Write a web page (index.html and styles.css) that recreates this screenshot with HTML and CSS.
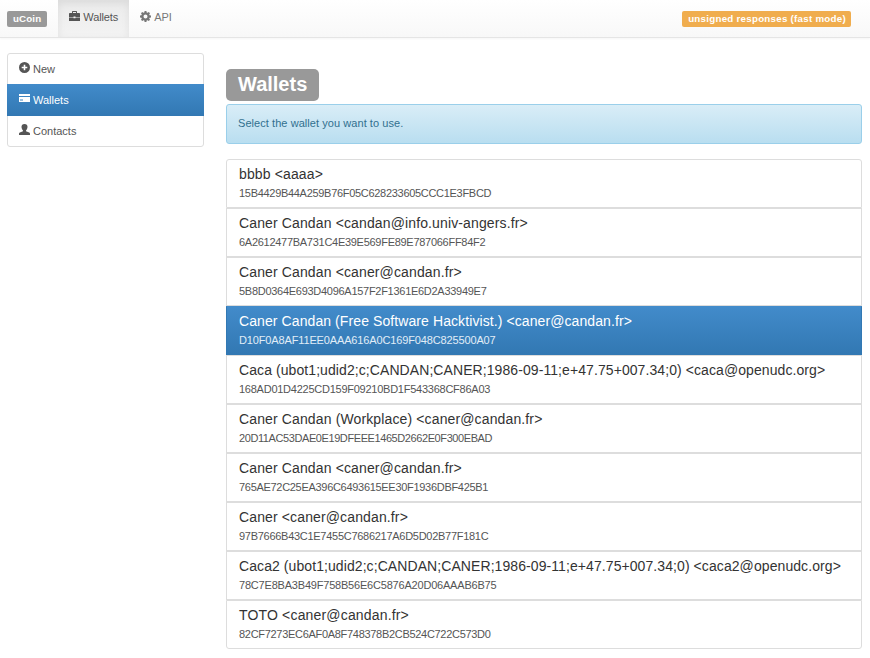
FILE: index.html
```html
<!DOCTYPE html>
<html lang="en">
<head>
<meta charset="utf-8">
<title>uCoin</title>
<link rel="stylesheet" href="styles.css">
</head>
<body>
<header class="navbar">
  <a class="brand"><span class="label">uCoin</span></a>
  <nav class="tabs">
    <a class="tab active"><svg class="icon" viewBox="0 0 11 11"><path d="M3 2V.7Q3 0 3.700 0H7.300Q8 0 8 .7V2h2.300q.7 0 .7.700V6H6.500v-.5h-2V6H0V2.700Q0 2 .7 2zM4 2h3V1H4zM0 6.600h4.500v.6h2v-.6H11V10H0z"/></svg><span>Wallets</span></a>
    <a class="tab"><svg class="icon" viewBox="0 0 11 11"><path fill-rule="evenodd" d="M4.600 0h1.800l.3 1.400.9.400L8.800 1 10 2.200l-.8 1.200.4.900 1.400.3v1.800l-1.400.3-.4.900.8 1.200L8.800 10l-1.200-.8-.9.400L6.400 11H4.600l-.3-1.400-.9-.4-1.200.8L1 8.800l.8-1.200-.4-.9L0 6.400V4.600l1.400-.3.4-.9L1 2.200 2.200 1l1.200.8.9-.4zM5.500 3.500a2 2 0 1 0 0 4 2 2 0 0 0 0-4z"/></svg><span>API</span></a>
  </nav>
  <span class="label warning">unsigned responses (fast mode)</span>
</header>
<div class="layout">
  <aside class="menu">
    <a class="menu-item"><svg class="icon" viewBox="0 0 11 11"><path fill-rule="evenodd" d="M5.500 0a5.500 5.500 0 1 0 0 11 5.500 5.500 0 0 0 0-11zM4.700 2.700h1.600v2h2v1.600h-2v2H4.700v-2h-2V4.700h2z"/></svg>New</a>
    <a class="menu-item active"><svg class="icon" viewBox="0 0 11 11"><path fill-rule="evenodd" d="M0 1h11v2H0zM0 4h11v5H0zM1 6.500v1h3v-1z"/></svg>Wallets</a>
    <a class="menu-item"><svg class="icon" viewBox="0 0 11 11"><path d="M5.500 0C7.500 0 8.500 1.200 8.500 2.800c0 1.500-.6 2.800-1.500 3.600v.9l3.200 1.200q.8.400.8 1.200V11H0V9.700q0-.8.800-1.200L4 7.300v-.9C3.100 5.600 2.500 4.300 2.500 2.800 2.500 1.200 3.500 0 5.500 0z"/></svg>Contacts</a>
  </aside>
  <main class="content">
    <h1 class="title"><span class="title-label">Wallets</span></h1>
    <div class="alert">Select the wallet you want to use.</div>
    <div class="wallets">
      <a class="wallet"><h2>bbbb &lt;aaaa&gt;</h2><p>15B4429B44A259B76F05C628233605CCC1E3FBCD</p></a>
      <a class="wallet"><h2>Caner Candan &lt;candan@info.univ-angers.fr&gt;</h2><p>6A2612477BA731C4E39E569FE89E787066FF84F2</p></a>
      <a class="wallet"><h2>Caner Candan &lt;caner@candan.fr&gt;</h2><p>5B8D0364E693D4096A157F2F1361E6D2A33949E7</p></a>
      <a class="wallet active"><h2>Caner Candan (Free Software Hacktivist.) &lt;caner@candan.fr&gt;</h2><p>D10F0A8AF11EE0AAA616A0C169F048C825500A07</p></a>
      <a class="wallet"><h2>Caca (ubot1;udid2;c;CANDAN;CANER;1986-09-11;e+47.75+007.34;0) &lt;caca@openudc.org&gt;</h2><p>168AD01D4225CD159F09210BD1F543368CF86A03</p></a>
      <a class="wallet"><h2>Caner Candan (Workplace) &lt;caner@candan.fr&gt;</h2><p>20D11AC53DAE0E19DFEEE1465D2662E0F300EBAD</p></a>
      <a class="wallet"><h2>Caner Candan &lt;caner@candan.fr&gt;</h2><p>765AE72C25EA396C6493615EE30F1936DBF425B1</p></a>
      <a class="wallet"><h2>Caner &lt;caner@candan.fr&gt;</h2><p>97B7666B43C1E7455C7686217A6D5D02B77F181C</p></a>
      <a class="wallet"><h2>Caca2 (ubot1;udid2;c;CANDAN;CANER;1986-09-11;e+47.75+007.34;0) &lt;caca2@openudc.org&gt;</h2><p>78C7E8BA3B49F758B56E6C5876A20D06AAAB6B75</p></a>
      <a class="wallet"><h2>TOTO &lt;caner@candan.fr&gt;</h2><p>82CF7273EC6AF0A8F748378B2CB524C722C573D0</p></a>
    </div>
  </main>
</div>
</body>
</html>
```
FILE: styles.css
```css
* { box-sizing: border-box; }
body {
  margin: 0;
  background: #fff;
  color: #333;
  font: 11px/16px "Liberation Sans", Arial, sans-serif;
}
h1, h2, p { margin: 0; font-weight: normal; }
.icon {
  width: 11px;
  height: 11px;
  margin-right: 3px;
  fill: currentColor;
  flex: none;
}
.navbar {
  display: flex;
  height: 38px;
  padding: 0 19px 0 7px;
  border-bottom: 1px solid #e5e5e5;
  background: linear-gradient(#fff, #f8f8f8);
  box-shadow: 0 1px 2px rgba(0, 0, 0, .04);
}
.brand { padding-top: 11px; margin-right: 11px; }
.label {
  display: block;
  height: 16px;
  padding: 0 6px;
  border-radius: 2px;
  background: #999;
  color: #fff;
  font-size: 9.75px;
  font-weight: bold;
  letter-spacing: .14px;
}
.warning { margin: 11px 0 0 auto; padding-right: 5px; background: #f0ad4e; letter-spacing: .26px; }
.tabs { display: flex; }
.tab {
  display: flex;
  height: 37px;
  padding: 11px 11px 0;
  color: #777;
}
.tab span { margin-top: -2px; letter-spacing: -.13px; }
.tab.active {
  width: 71px;
  background: linear-gradient(#ebebeb, #f3f3f3);
  box-shadow: inset 0 3px 9px rgba(0, 0, 0, .075);
  color: #555;
}
.layout {
  display: flex;
  gap: 22px;
  padding: 15px 8px 0 7px;
}
.menu {
  width: 197px;
  height: 94px;
  border: 1px solid #ddd;
  border-radius: 3px;
}
.menu-item {
  display: flex;
  height: 31px;
  padding: 7px 11px;
  color: #555;
}
.menu-item .icon { margin-top: 1px; }
.menu-item.active {
  height: 32px;
  margin: -1px -1px 0;
  padding: 8px 12px;
  background: linear-gradient(#428bca, #3278b3);
  color: #fff;
}
.content { flex: 1; padding-top: 16px; }
.title { height: 35px; }
.title-label {
  display: inline-block;
  height: 32px;
  padding: 0 12px;
  border-radius: 5px;
  background: #999;
  color: #fff;
  font-size: 20px;
  font-weight: bold;
  line-height: 31px;
}
.alert {
  height: 40px;
  margin-bottom: 15px;
  padding: 10px 11px;
  border: 1px solid #9acfea;
  border-radius: 3px;
  background: linear-gradient(#d9edf7, #b9def0);
  color: #31708f;
  letter-spacing: .06px;
}
.wallet {
  display: block;
  height: 49px;
  padding: 6px 12px;
  border: 1px solid #ddd;
}
.wallet:first-child { border-radius: 3px 3px 0 0; }
.wallet:last-child { border-radius: 0 0 3px 3px; }
.wallet h2 { font-size: 14px; line-height: 17px; letter-spacing: .13px; color: #333; }
.wallet p { margin-top: 3px; line-height: 15px; letter-spacing: -.28px; color: #555; }
.wallet.active {
  border-color: #3278b3;
  border-top-color: #428bca;
  background: linear-gradient(#428bca, #3278b3);
}
.wallet.active h2 { letter-spacing: .09px; color: #fff; }
.wallet.active p { letter-spacing: -.14px; color: #e1edf7; }

.wallet:nth-child(5) h2, .wallet:nth-child(9) h2 { letter-spacing: .08px; }
.wallet:nth-child(10) h2 { letter-spacing: .17px; }
.wallet:nth-child(1) p, .wallet:nth-child(7) p, .wallet:nth-child(10) p { letter-spacing: -.3px; }
.wallet:nth-child(5) p { letter-spacing: -.25px; }
.wallet:nth-child(6) p { letter-spacing: -.41px; }
.wallet:nth-child(9) p { letter-spacing: -.2px; }
```
